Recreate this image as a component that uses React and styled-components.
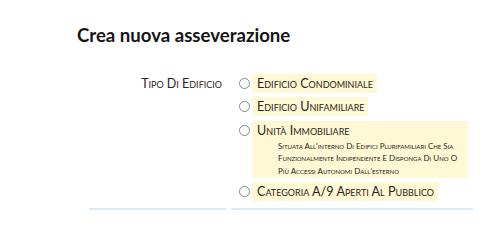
import styled, { createGlobalStyle } from 'styled-components';

const GlobalStyle = createGlobalStyle`
  body {
    margin: 0;
    background: #ffffff;
    font-family: Lato, "Open Sans", sans-serif;
    color: #2a2420;
  }
`;

const options = [
  { id: 'condominiale', label: 'Edificio Condominiale' },
  { id: 'unifamiliare', label: 'Edificio Unifamiliare' },
  {
    id: 'unita',
    label: 'Unità Immobiliare',
    note: "Situata All'interno Di Edifici Plurifamiliari Che Sia Funzionalmente Indipendente E Disponga Di Uno O Più Accessi Autonomi Dall'esterno",
  },
  { id: 'a9', label: 'Categoria A/9 Aperti Al Pubblico' },
];

const App = () => {
  return (
    <Page>
      <GlobalStyle />
      <Title>Crea nuova asseverazione</Title>
      <Form>
        <Label>Tipo Di Edificio</Label>
        <Field>
          {options.map((opt) => (
            <Option key={opt.id}>
              <Radio type="radio" name="tipo" />
              <Choice>
                <ChoiceTitle>{opt.label}</ChoiceTitle>
                {opt.note && <Note>{opt.note}</Note>}
              </Choice>
            </Option>
          ))}
        </Field>
        <NextCell />
        <NextCell />
      </Form>
    </Page>
  );
};

const Page = styled.div`
  padding: 25px 0 0 77px;
  height: 218px;
  box-sizing: border-box;
  overflow: hidden;
`;

const Title = styled.h1`
  margin: 0;
  font-size: 18.6px;
  line-height: 21.6px;
  font-weight: 700;
  color: #151515;
`;

const Form = styled.div`
  display: grid;
  grid-template-columns: 137px 242px;
  column-gap: 5px;
  margin: 27px 0 0 12px;
`;

const Label = styled.div`
  text-align: right;
  padding-right: 4px;
  font-size: 12.5px;
  line-height: 19px;
  font-variant: small-caps;
  text-transform: capitalize;
`;

const Field = styled.div`
  padding: 0 5px 7px 8px;
  display: flex;
  flex-direction: column;
  gap: 4.5px;
`;

const Option = styled.label`
  display: flex;
  align-items: flex-start;
  gap: 2px;
`;

const Radio = styled.input`
  appearance: none;
  width: 11px;
  height: 11px;
  margin: 4px 0 0;
  border: 1px solid #8a8a8a;
  border-radius: 50%;
  background: #fff;
  box-sizing: border-box;
  flex-shrink: 0;
`;

const Choice = styled.div`
  background: #fff8d4;
  padding: 0 4px 0 5px;
`;

const ChoiceTitle = styled.div`
  font-size: 12.6px;
  line-height: 19px;
  font-variant: small-caps;
  white-space: nowrap;
`;

const Note = styled.div`
  margin-left: 21px;
  font-size: 8px;
  line-height: 12.5px;
  font-variant: small-caps;
  padding-bottom: 0.5px;
`;

const NextCell = styled.div`
  border-top: 2px solid #d9ebf6;
  height: 10px;
`;

export default App;
